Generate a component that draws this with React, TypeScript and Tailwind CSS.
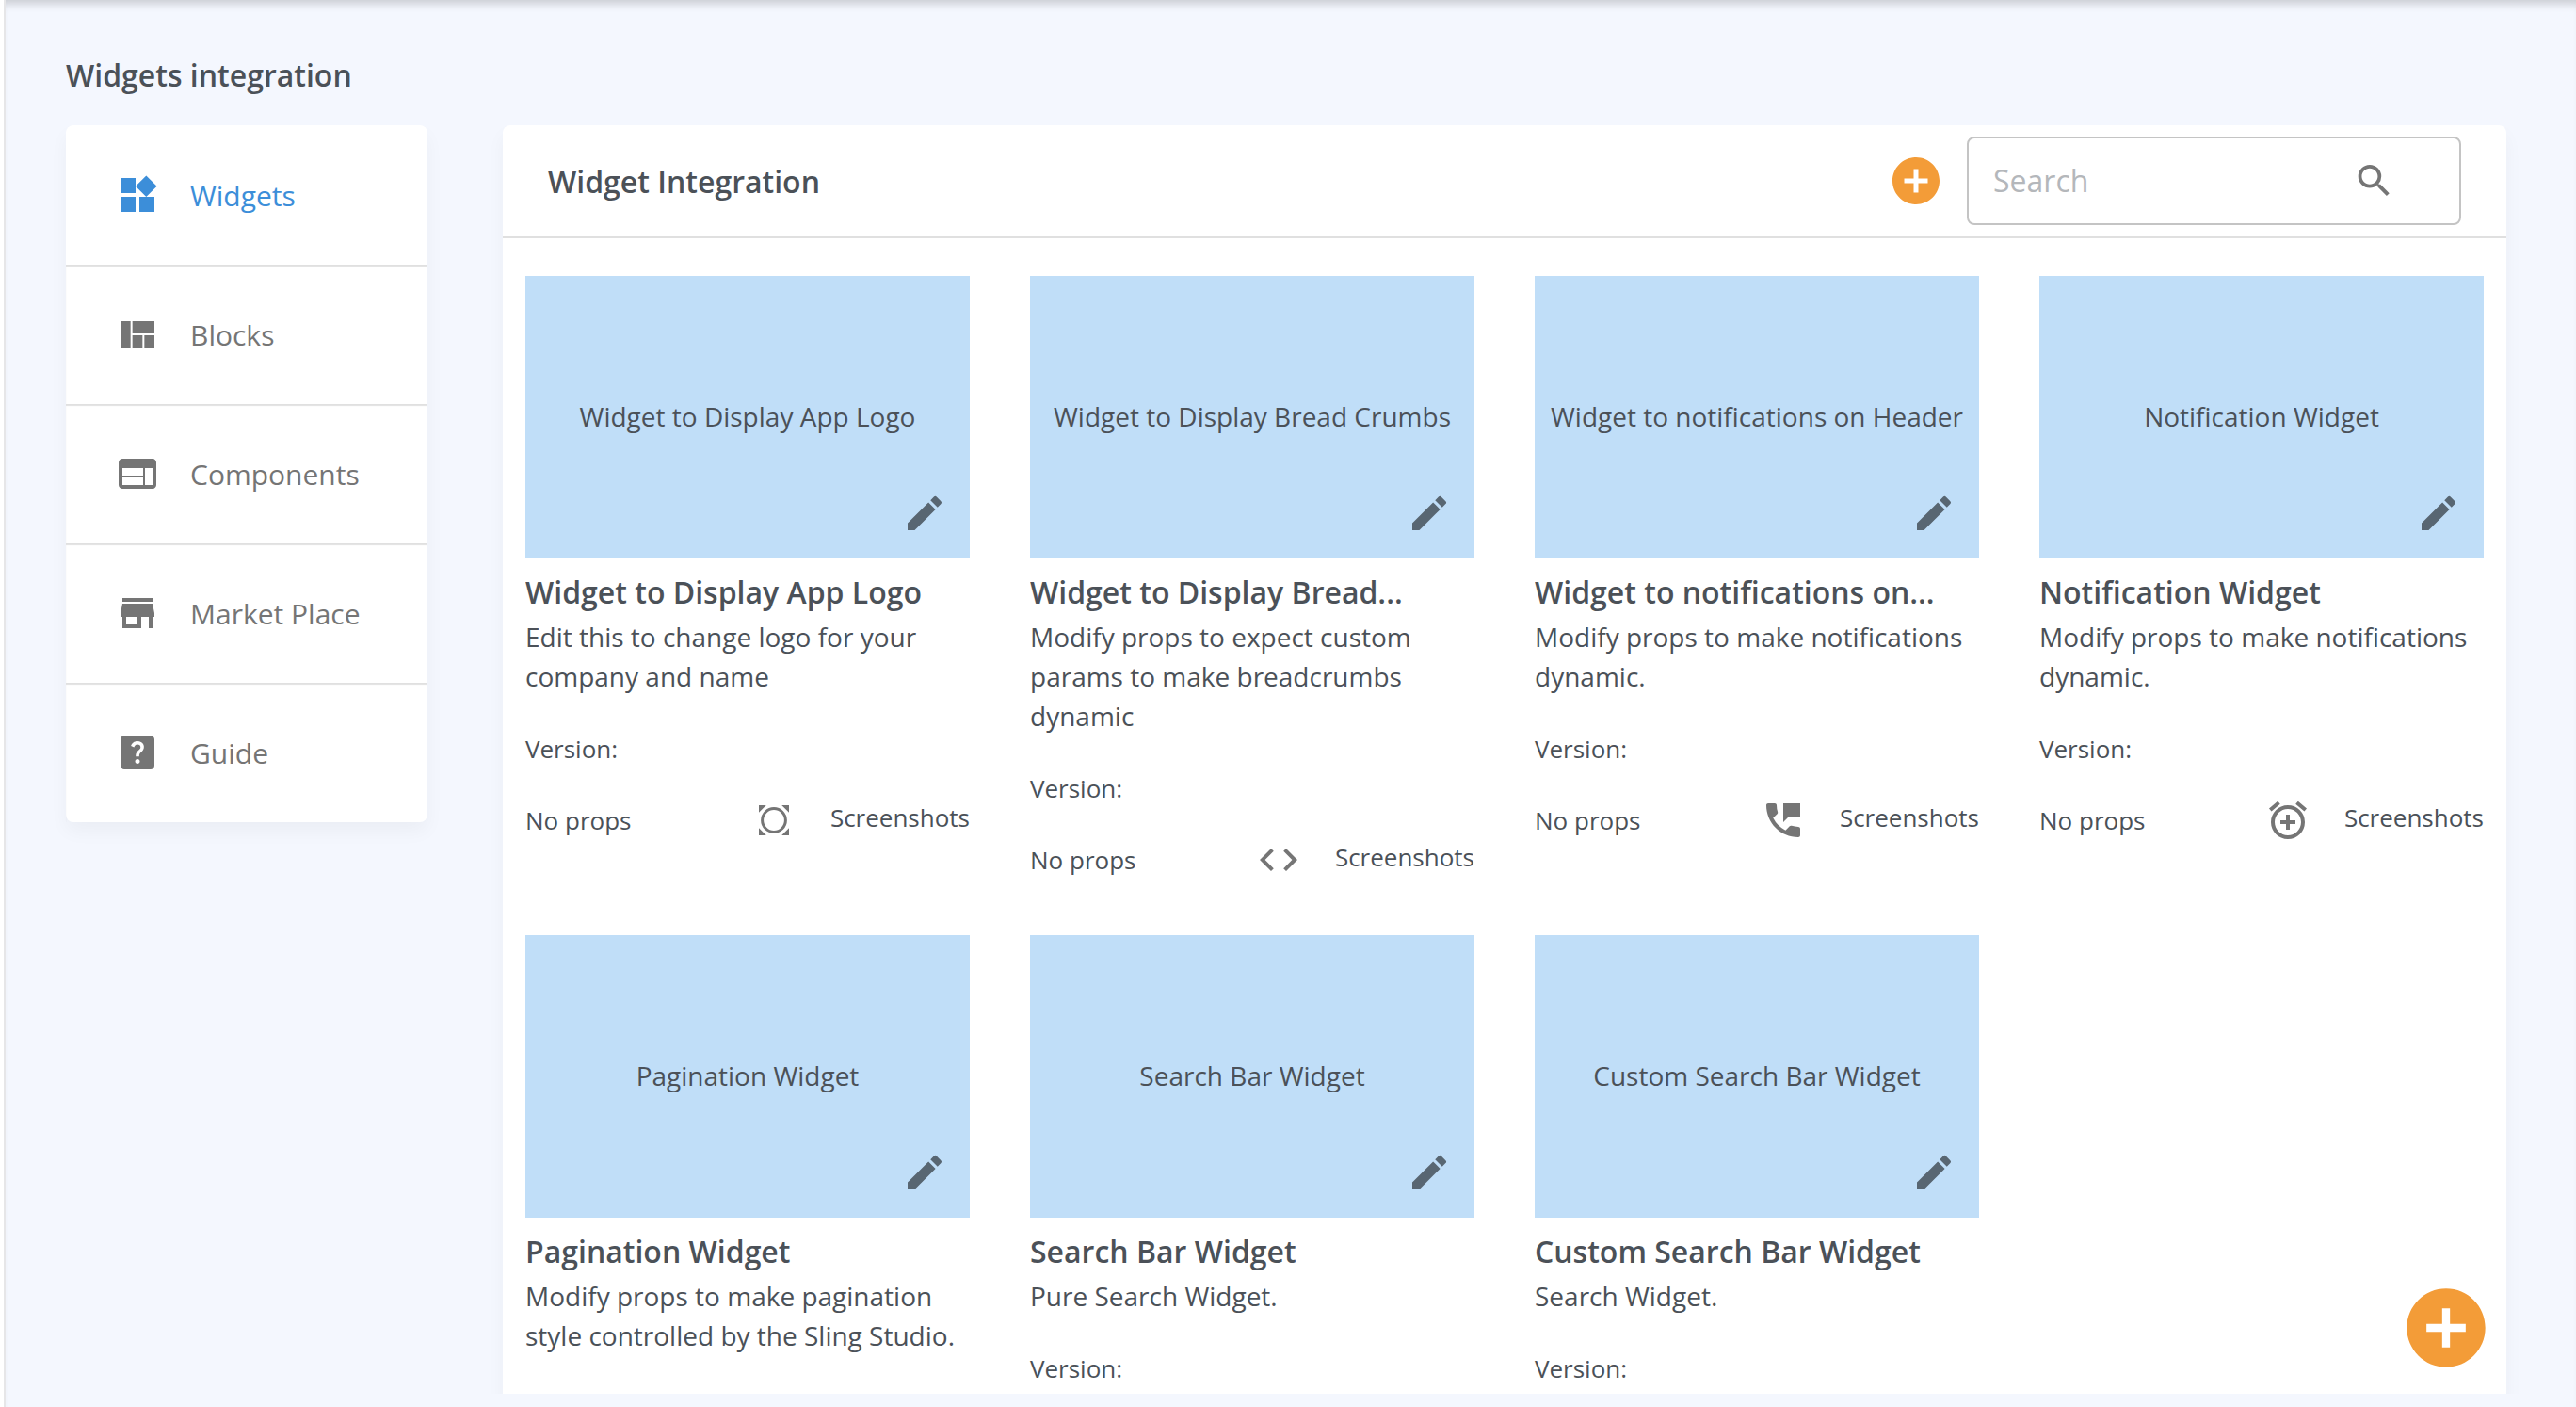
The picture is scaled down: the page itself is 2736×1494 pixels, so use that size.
import type { ComponentType } from "react";
import {
  MdAddCircle,
  MdAlarmAdd,
  MdCode,
  MdEdit,
  MdHelpCenter,
  MdPermPhoneMsg,
  MdSearch,
  MdStore,
  MdViewQuilt,
  MdWeb,
  MdWidgets,
} from "react-icons/md";

type Icon = ComponentType<{ className?: string }>;

function LensCorners({ className }: { className?: string }) {
  return (
    <svg viewBox="0 0 24 24" className={className} fill="currentColor" aria-hidden="true">
      <circle cx="12" cy="12" r="6.2" fill="none" stroke="currentColor" strokeWidth="1.5" />
      <path d="M4 4h3.9L4 7.9zM20 4v3.9L16.1 4zM4 20v-3.9L7.9 20zM20 20h-3.9l3.9-3.9z" />
    </svg>
  );
}

const menu: { label: string; icon: Icon; active?: boolean }[] = [
  { label: "Widgets", icon: MdWidgets, active: true },
  { label: "Blocks", icon: MdViewQuilt },
  { label: "Components", icon: MdWeb },
  { label: "Market Place", icon: MdStore },
  { label: "Guide", icon: MdHelpCenter },
];

const widgets: { name: string; title?: string; text: string; icon: Icon }[] = [
  { name: "Widget to Display App Logo", text: "Edit this to change logo for your company and name", icon: LensCorners },
  {
    name: "Widget to Display Bread Crumbs",
    title: "Widget to Display Bread...",
    text: "Modify props to expect custom params to make breadcrumbs dynamic",
    icon: MdCode,
  },
  {
    name: "Widget to notifications on Header",
    title: "Widget to notifications on...",
    text: "Modify props to make notifications dynamic.",
    icon: MdPermPhoneMsg,
  },
  { name: "Notification Widget", text: "Modify props to make notifications dynamic.", icon: MdAlarmAdd },
  {
    name: "Pagination Widget",
    text: "Modify props to make pagination style controlled by the Sling Studio.",
    icon: MdCode,
  },
  { name: "Search Bar Widget", text: "Pure Search Widget.", icon: MdSearch },
  { name: "Custom Search Bar Widget", text: "Search Widget.", icon: MdSearch },
];

function Card({ name, title, text, icon: CardIcon }: (typeof widgets)[number]) {
  return (
    <article>
      <div className="relative flex h-[300px] items-center justify-center bg-[#c0def8] pb-0.5 text-[28px]">
        <span className="whitespace-nowrap">{name}</span>
        <button type="button" aria-label={`Edit ${name}`} className="absolute right-6 bottom-6 text-black/54">
          <MdEdit className="size-12" />
        </button>
      </div>
      <h3 className="mt-3.5 truncate text-[32px] leading-[44px] font-semibold">{title ?? name}</h3>
      <p className="mt-1 text-[28px] leading-[42px]">{text}</p>
      <p className="mt-9 text-[26px] leading-[40px] font-medium">Version:</p>
      <div className="mt-8 flex items-center text-[26px] leading-[48px] font-medium">
        <span className="mr-auto">No props</span>
        <CardIcon className="mr-9 size-12 text-[#757575]" />
        <a href="#screenshots" className="pb-1.5 leading-[40px]">Screenshots</a>
      </div>
    </article>
  );
}

export default function App() {
  return (
    <div className="flex h-screen flex-col overflow-hidden border-l-4 border-white bg-[#f4f7fe] font-['Open_Sans',sans-serif] text-[#4b5158]">
      <div className="flex min-h-0 grow flex-col border-l-2 border-[#e6e6e8] px-16 pb-[14px] shadow-[inset_0_10px_10px_-6px_rgba(0,0,0,0.18)]">
        <h1 className="mt-14 mb-[29px] text-[32px] leading-[48px] font-semibold">Widgets integration</h1>
        <div className="-mx-8 flex min-h-0 grow items-start gap-20 overflow-hidden px-8">
          <nav className="w-96 shrink-0 rounded-lg bg-white shadow-[0_10px_20px_rgba(0,0,0,0.04)]">
            {menu.map(({ label, icon: MenuIcon, active }, i) => (
              <a
                key={label}
                href="#menu"
                className={`flex h-[148px] items-center gap-8 pl-[52px] text-[30px] ${active ? "text-[#3c8ed9]" : "text-[#757575]"} ${i > 0 ? "shadow-[inset_0_2px_1px_rgba(0,0,0,0.12)]" : ""}`}
              >
                <MenuIcon className="size-12" />
                {label}
              </a>
            ))}
          </nav>
          <main className="mr-[10px] grow rounded-lg bg-white shadow-[0_10px_20px_rgba(0,0,0,0.04)]">
            <header className="flex h-[120px] items-center border-b-2 border-[#e0e0e0] px-12">
              <h2 className="mr-auto pt-0.5 text-[32px] font-semibold">Widget Integration</h2>
              <button type="button" aria-label="Add widget" className="mr-6 text-[#f39c38]">
                <MdAddCircle className="size-[60px]" />
              </button>
              <label className="flex h-[94px] w-[525px] items-center rounded-lg border-2 border-[#c4c4c4] px-[26px]">
                <input
                  type="text"
                  aria-label="Search"
                  placeholder="Search"
                  className="min-w-0 grow text-[32px] outline-none placeholder:text-[#b4b7bb]"
                />
                <MdSearch className="mr-[42px] size-12 text-[#757575]" />
              </label>
            </header>
            <div className="grid grid-cols-4 gap-x-16 gap-y-14 px-6 pt-10 pb-12">
              {widgets.map((w) => (
                <Card key={w.name} {...w} />
              ))}
            </div>
          </main>
        </div>
      </div>
      <button type="button" aria-label="Create" className="fixed right-22 bottom-[34px] text-[#f39c38]">
        <MdAddCircle className="size-[100px]" />
      </button>
    </div>
  );
}
